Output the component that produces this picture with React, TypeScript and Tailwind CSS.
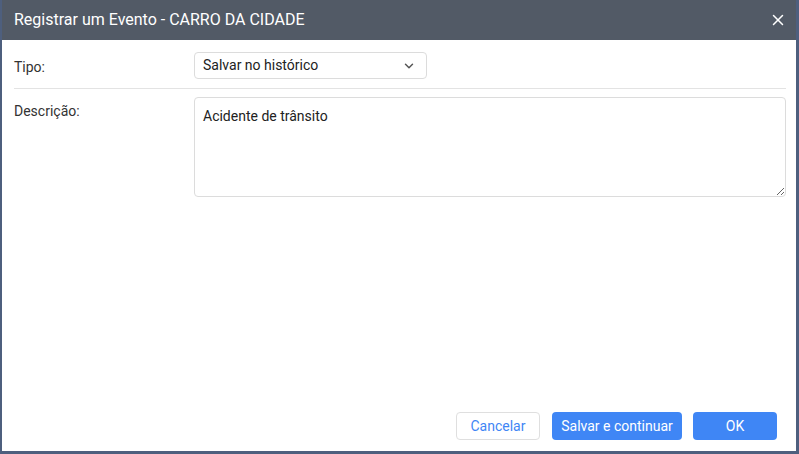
import { X, ChevronDown } from "lucide-react";

export default function App() {
  return (
    <div
      className="h-[454px] w-[799px] overflow-hidden bg-[#4e5f7e] pb-[3px] pl-[2px] pr-[3px]"
      style={{ fontFamily: "Roboto, 'Liberation Sans', sans-serif" }}
    >
      <div className="flex h-full flex-col bg-white">
        <div className="flex h-[40px] shrink-0 items-center justify-between bg-[#525a66] pl-[12px] pr-[9px]">
          <span className="text-[16px] text-white">Registrar um Evento - CARRO DA CIDADE</span>
          <X className="h-[18px] w-[18px] text-white" strokeWidth={2} />
        </div>

        <div className="flex flex-1 flex-col pl-[12px] pr-[10px]">
          <div className="flex items-start border-b border-[#e3e3e3] pb-[9px] pt-[12px]">
            <div className="w-[180px] pt-[5px] text-[14px] text-[#333]">Tipo:</div>
            <div className="flex h-[27px] w-[233px] items-center justify-between rounded-[4px] border border-[#dcdcdc] pl-[8px] pr-[10px] text-[14px] text-[#222]">
              <span>Salvar no histórico</span>
              <ChevronDown className="h-[14px] w-[14px] text-[#555]" strokeWidth={2.5} />
            </div>
          </div>

          <div className="flex items-start pt-[8px]">
            <div className="w-[180px] pt-[4px] text-[14px] text-[#333]">Descrição:</div>
            <textarea
              className="h-[100px] flex-1 rounded-[4px] border border-[#dcdcdc] px-[8px] pt-[8px] text-[14px] text-[#222] outline-none"
              defaultValue="Acidente de trânsito"
            />
          </div>

          <div className="flex-1" />

          <div className="flex justify-end gap-[12px] pb-[11px] pr-[9px]">
            <button className="h-[28px] w-[84px] rounded-[4px] border border-[#dfdfdf] bg-white text-[14px] text-[#3f86f5]">
              Cancelar
            </button>
            <button className="h-[28px] w-[130px] rounded-[4px] bg-[#3f86f5] text-[14px] text-white">
              Salvar e continuar
            </button>
            <button className="ml-[-1px] h-[28px] w-[84px] rounded-[4px] bg-[#3f86f5] text-[14px] text-white">
              OK
            </button>
          </div>
        </div>
      </div>
    </div>
  );
}
